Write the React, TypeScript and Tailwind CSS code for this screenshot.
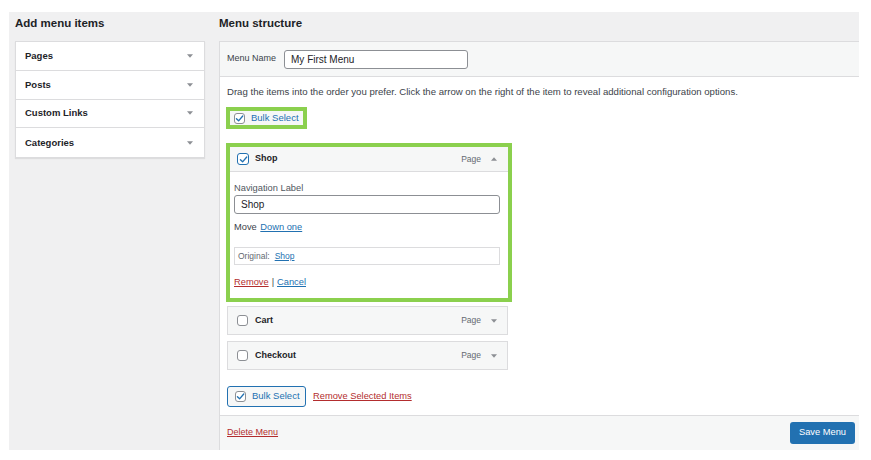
import React from "react";

const font = { fontFamily: '"Liberation Sans", Arial, sans-serif' };

function Arrow({ up = false }: { up?: boolean }) {
  return (
    <svg width="6" height="4" viewBox="0 0 6 4" className="shrink-0">
      {up ? (
        <polygon points="0,3.8 6,3.8 3,0.3" fill="#8c8f94" />
      ) : (
        <polygon points="0,0.2 6,0.2 3,3.7" fill="#8c8f94" />
      )}
    </svg>
  );
}

function Check({ checked = false, blue = false }: { checked?: boolean; blue?: boolean }) {
  return (
    <span
      className={
        blue
          ? "w-[12px] h-[12px] rounded-[3px] border-[1.5px] border-[#2271b1] bg-white flex items-center justify-center shrink-0"
          : "w-[11px] h-[11px] rounded-[3px] border border-[#8c8f94] bg-white flex items-center justify-center shrink-0"
      }
    >
      {checked && (
        <svg width="9" height="9" viewBox="0 0 10 10">
          <path d="M1.6 5.2 L4 7.6 L8.6 2.2" stroke="#2271b1" strokeWidth="1.5" fill="none" strokeLinecap="round" strokeLinejoin="round" />
        </svg>
      )}
    </span>
  );
}

function LeftRow({ label, last = false }: { label: string; last?: boolean }) {
  return (
    <div
      className={
        "h-[28.75px] flex items-center justify-between pl-[9px] pr-[11px] " +
        (last ? "" : "border-b border-[#dcdcde]")
      }
    >
      <span className="text-[9.5px] font-bold text-[#1d2327]">{label}</span>
      <Arrow />
    </div>
  );
}

function Item({ label }: { label: string }) {
  return (
    <div className="ml-[1px] w-[281px] h-[29px] border border-[#dcdcde] bg-[#f6f7f7] flex items-center pl-[9px] pr-[10px]">
      <Check />
      <span className="ml-[7px] text-[9px] font-bold text-[#1d2327] flex-1">{label}</span>
      <span className="text-[8.5px] text-[#646970] mr-[10px]">Page</span>
      <Arrow />
    </div>
  );
}

export default function App() {
  return (
    <div className="w-[871px] h-[460px] bg-white pt-[12px] pl-[9px]" style={font}>
      <div className="w-[850px] h-[438px] bg-[#f0f0f1] flex">
        {/* Left column */}
        <div className="w-[210px] pl-[6px] flex flex-col">
          <div className="h-[29px] flex items-center pb-[5px]">
            <span className="text-[11.5px] font-bold text-[#1d2327]">Add menu items</span>
          </div>
          <div className="w-[190px] bg-white border border-[#dcdcde] shadow-[0_1px_1px_rgba(0,0,0,0.08)]">
            <LeftRow label="Pages" />
            <LeftRow label="Posts" />
            <LeftRow label="Custom Links" />
            <LeftRow label="Categories" last />
          </div>
        </div>

        {/* Right column */}
        <div className="w-[640px] flex flex-col">
          <div className="h-[29px] flex items-center pb-[5px]">
            <span className="text-[11.5px] font-bold text-[#1d2327]">Menu structure</span>
          </div>
          <div className="flex-1 border-l border-t border-[#dcdcde] bg-white flex flex-col">
            {/* header */}
            <div className="h-[35px] bg-[#f6f7f7] border-b border-[#dcdcde] flex items-center pl-[7px]">
              <span className="text-[9px] text-[#3c434a]">Menu Name</span>
              <div className="ml-[8px] w-[184px] h-[19px] border border-[#8c8f94] rounded-[3px] bg-white flex items-center pl-[6px]">
                <span className="text-[10px] text-[#1d2327]">My First Menu</span>
              </div>
            </div>

            {/* body */}
            <div className="flex-1 pl-[6px] pt-[9px] flex flex-col items-start">
              <div className="ml-[1px] h-[12px] leading-[12px] text-[9.6px] text-[#3c434a] whitespace-nowrap">
                Drag the items into the order you prefer. Click the arrow on the right of the item to reveal additional configuration options.
              </div>

              <div className="mt-[9px] w-[81px] h-[22px] border-[4px] border-[#8bd04e] bg-[#f6f7f7] flex items-center pl-[4px]">
                <Check checked />
                <span className="ml-[6px] text-[9.5px] text-[#2271b1]">Bulk Select</span>
              </div>

              {/* Shop expanded */}
              <div className="mt-[14px] w-[286px] h-[159px] border-[4px] border-[#8bd04e] bg-white flex flex-col">
                <div className="h-[25px] shrink-0 bg-[#f6f7f7] border-b border-[#dcdcde] flex items-center pl-[7px] pr-[11px]">
                  <Check checked blue />
                  <span className="ml-[6px] text-[9px] font-bold text-[#1d2327] flex-1">Shop</span>
                  <span className="text-[8.5px] text-[#646970] mr-[10px]">Page</span>
                  <Arrow up />
                </div>
                <div className="pl-[4px] pr-[8px] pt-[10px] flex flex-col">
                  <div className="h-[12px] leading-[12px] text-[9.3px] text-[#50575e]">Navigation Label</div>
                  <div className="mt-[1px] h-[19px] border border-[#8c8f94] rounded-[3px] bg-white flex items-center pl-[6px]">
                    <span className="text-[10px] text-[#1d2327]">Shop</span>
                  </div>
                  <div className="mt-[7px] h-[12px] leading-[12px] text-[9.3px] text-[#3c434a]">
                    Move <span className="ml-[1px] text-[#2271b1] underline">Down one</span>
                  </div>
                  <div className="mt-[14px] h-[18px] border border-[#dcdcde] flex items-center pl-[3px]">
                    <span className="text-[8.5px] text-[#646970]">Original:</span>
                    <span className="ml-[5px] text-[8.5px] text-[#2271b1] underline">Shop</span>
                  </div>
                  <div className="mt-[11px] h-[12px] leading-[12px] text-[9.3px] text-[#3c434a]">
                    <span className="text-[#b32d2e] underline">Remove</span>
                    <span className="mx-[3px]">|</span>
                    <span className="text-[#2271b1] underline">Cancel</span>
                  </div>
                </div>
              </div>

              <div className="mt-[4px]">
                <Item label="Cart" />
              </div>
              <div className="mt-[6px]">
                <Item label="Checkout" />
              </div>

              <div className="mt-[16px] ml-[1px] flex items-center">
                <div className="w-[79px] h-[21px] border border-[#2271b1] rounded-[3px] bg-[#f6f7f7] flex items-center pl-[7px]">
                  <Check checked />
                  <span className="ml-[6px] text-[9.5px] text-[#2271b1]">Bulk Select</span>
                </div>
                <span className="ml-[7px] text-[9.3px] text-[#b32d2e] underline">Remove Selected Items</span>
              </div>
            </div>

            {/* footer */}
            <div className="h-[35px] bg-[#f6f7f7] border-t border-[#dcdcde] flex items-center justify-between pl-[7px] pr-[4px]">
              <span className="text-[9px] text-[#b32d2e] underline">Delete Menu</span>
              <div className="w-[65px] h-[22px] bg-[#2271b1] rounded-[3px] flex items-center justify-center">
                <span className="text-[9.3px] text-white">Save Menu</span>
              </div>
            </div>
          </div>
        </div>
      </div>
    </div>
  );
}
